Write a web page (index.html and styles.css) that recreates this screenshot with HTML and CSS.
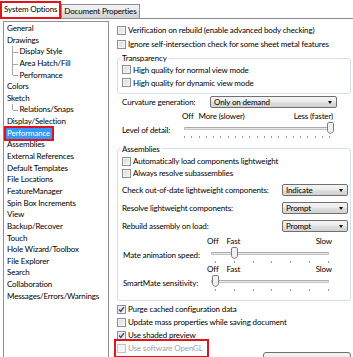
FILE: index.html
```html
<!DOCTYPE html>
<html lang="en">
<head>
<meta charset="utf-8">
<title>System Options - Performance</title>
<link rel="stylesheet" href="styles.css">
</head>
<body>
<div class="dialog">
  <div class="tabs">
    <div class="tab tab-active">System Options</div>
    <div class="tab">Document Properties</div>
    <div class="tab-rest"></div>
  </div>
  <div class="main">
    <ul class="tree">
      <li class="item">General</li>
      <li class="item">Drawings</li>
      <li class="item sub">Display Style</li>
      <li class="item sub">Area Hatch/Fill</li>
      <li class="item sub last">Performance</li>
      <li class="item">Colors</li>
      <li class="item">Sketch</li>
      <li class="item sub last">Relations/Snaps</li>
      <li class="item">Display/Selection</li>
      <li class="item"><span class="selected">Performance</span></li>
      <li class="item">Assemblies</li>
      <li class="item">External References</li>
      <li class="item">Default Templates</li>
      <li class="item">File Locations</li>
      <li class="item">FeatureManager</li>
      <li class="item">Spin Box Increments</li>
      <li class="item">View</li>
      <li class="item">Backup/Recover</li>
      <li class="item">Touch</li>
      <li class="item">Hole Wizard/Toolbox</li>
      <li class="item">File Explorer</li>
      <li class="item">Search</li>
      <li class="item">Collaboration</li>
      <li class="item">Messages/Errors/Warnings</li>
    </ul>

    <div class="pane">
      <div class="check row14"><span class="box"></span>Verification on rebuild (enable advanced body checking)</div>
      <div class="check row14"><span class="box"></span>Ignore self-intersection check for some sheet metal features</div>

      <fieldset class="group group-trans">
        <legend>Transparency</legend>
        <div class="check row13"><span class="box"></span>High quality for normal view mode</div>
        <div class="check row13"><span class="box"></span>High quality for dynamic view mode</div>
      </fieldset>

      <div class="field field-curv">
        <span class="field-label label-curv">Curvature generation:</span>
        <div class="combo combo-curv">Only on demand</div>
      </div>

      <div class="slider-block block-lod">
        <span class="slider-label label-lod">Level of detail:</span>
        <div class="slider slider-lod">
          <div class="scale"><span>Off</span><span class="scale-mid-lod">More (slower)</span><span class="scale-end">Less (faster)</span></div>
          <div class="track">
            <div class="groove groove-lod"></div>
            <svg class="thumb" style="left:145px" width="7" height="12" viewBox="0 0 7 12"><path d="M0.5 1.8 Q0.5 0.5 1.8 0.5 H5.2 Q6.5 0.5 6.5 1.8 V8.8 Q6.5 9.6 5.8 10.2 L3.5 11.5 L1.2 10.2 Q0.5 9.6 0.5 8.8 Z" fill="#f1f1f1" stroke="#7b7b7b"/></svg>
          </div>
          <div class="ticks ticks-lod"><i></i><i></i><i></i><i></i><i></i><i></i><i></i><i></i><i></i><i></i><i></i><i></i><i></i><i></i><i></i><i></i><i></i><i></i><i></i><i></i><i></i></div>
        </div>
      </div>

      <fieldset class="group group-asm">
        <legend>Assemblies</legend>
        <div class="check row12 first-asm"><span class="box"></span>Automatically load components lightweight</div>
        <div class="check row12"><span class="box"></span>Always resolve subassemblies</div>

        <div class="field field-asm">
          <span class="field-label label-asm">Check out-of-date lightweight components:</span>
          <div class="combo combo-asm">Indicate</div>
        </div>
        <div class="field field-asm">
          <span class="field-label label-asm">Resolve lightweight components:</span>
          <div class="combo combo-asm">Prompt</div>
        </div>
        <div class="field field-asm">
          <span class="field-label label-asm">Rebuild assembly on load:</span>
          <div class="combo combo-asm">Prompt</div>
        </div>

        <div class="slider-block block-mate">
          <span class="slider-label label-mate">Mate animation speed:</span>
          <div class="slider slider-mate">
            <div class="scale"><span>Off</span><span class="scale-mid-mate">Fast</span><span class="scale-end">Slow</span></div>
            <div class="track">
              <div class="groove groove-mate"></div>
              <svg class="thumb" style="left:23.5px" width="7" height="12" viewBox="0 0 7 12"><path d="M0.5 1.8 Q0.5 0.5 1.8 0.5 H5.2 Q6.5 0.5 6.5 1.8 V8.8 Q6.5 9.6 5.8 10.2 L3.5 11.5 L1.2 10.2 Q0.5 9.6 0.5 8.8 Z" fill="#f1f1f1" stroke="#7b7b7b"/></svg>
            </div>
            <div class="ticks ticks-mate"><i></i><i></i><i></i><i></i><i></i><i></i><i></i></div>
          </div>
        </div>

        <div class="slider-block block-mate">
          <span class="slider-label label-mate">SmartMate sensitivity:</span>
          <div class="slider slider-mate">
            <div class="scale"><span>Off</span><span class="scale-mid-mate">Fast</span><span class="scale-end">Slow</span></div>
            <div class="track">
              <div class="groove groove-mate"></div>
              <svg class="thumb" style="left:4.5px" width="7" height="12" viewBox="0 0 7 12"><path d="M0.5 1.8 Q0.5 0.5 1.8 0.5 H5.2 Q6.5 0.5 6.5 1.8 V8.8 Q6.5 9.6 5.8 10.2 L3.5 11.5 L1.2 10.2 Q0.5 9.6 0.5 8.8 Z" fill="#f1f1f1" stroke="#7b7b7b"/></svg>
            </div>
            <div class="ticks ticks-mate"><i></i><i></i><i></i><i></i><i></i><i></i><i></i></div>
          </div>
        </div>
      </fieldset>

      <div class="bottom-checks">
        <div class="check row13"><span class="box"><svg width="7" height="7" viewBox="0 0 7 7"><path d="M1 3.6 L2.8 5.5 L6 1.2" fill="none" stroke="#2b4a86" stroke-width="1.4"/></svg></span>Purge cached configuration data</div>
        <div class="check row13"><span class="box"></span>Update mass properties while saving document</div>
        <div class="check row13"><span class="box"><svg width="7" height="7" viewBox="0 0 7 7"><path d="M1 3.6 L2.8 5.5 L6 1.2" fill="none" stroke="#2b4a86" stroke-width="1.4"/></svg></span>Use shaded preview</div>
        <div class="check row13 disabled hl"><span class="box box-dis"></span>Use software OpenGL</div>
      </div>
      <div class="btn">Go To Image Quality</div>
    </div>
  </div>
</div>
</body>
</html>
```

FILE: styles.css
```css
* { box-sizing: border-box; }
html, body { margin: 0; padding: 0; }
body {
  width: 353px;
  height: 357px;
  overflow: hidden;
  background: #fff;
  font-family: Lato, "Liberation Sans", sans-serif;
  font-size: 8px;
  letter-spacing: -0.15px;
  color: #000;
}
.dialog { width: 353px; height: 357px; overflow: hidden; }

/* tabs */
.tabs { display: flex; align-items: flex-end; height: 19px; }
.tab {
  height: 15px;
  padding: 0 2px;
  border: 1px solid #898c95;
  border-bottom: 1px solid #898c95;
  background: linear-gradient(#f3f3f3, #ebebeb 50%, #dedede 50%, #d3d3d3);
  line-height: 13px;
  white-space: nowrap;
}
.tab-active {
  height: 18px;
  padding: 0 3px;
  background: #fff;
  border-bottom: none;
  line-height: 15px;
  outline: 2px solid #e3131b;
  outline-offset: -2px;
}
.tab-rest { flex: 1; border-bottom: 1px solid #898c95; }

/* layout */
.main { display: flex; }

.tree {
  list-style: none;
  margin: 2px 0 0 3px;
  padding: 1px 0 0 0;
  width: 106px;
  height: 400px;
  border: 1px solid #8e9097;
  flex: none;
}
.item {
  line-height: 11.65px;
  height: 11.65px;
  padding-left: 3px;
  white-space: nowrap;
}
.sub { position: relative; padding-left: 15.5px; }
.sub::before {
  content: "";
  position: absolute;
  left: 8px; top: 0; bottom: 0;
  border-left: 1px solid #a6a6a6;
}
.sub.last::before { bottom: 50%; }
.sub::after {
  content: "";
  position: absolute;
  left: 9px; top: 50%; width: 5px;
  border-top: 1px solid #a6a6a6;
}
.selected {
  display: inline-block;
  background: #3399ff;
  color: #fff;
  padding: 0 2px 0 1px;
  margin-left: -1px;
  line-height: 11.65px;
  outline: 2px solid #e3131b;
  outline-offset: 0;
}

.pane {
  flex: 1;
  padding: 4px 2px 0 8px;
  min-width: 0;
}

/* checkboxes */
.check { display: flex; align-items: center; white-space: nowrap; }
.row14 { height: 14px; }
.row13 { height: 13px; }
.row12 { height: 12px; }
.box {
  flex: none;
  width: 9px;
  height: 9px;
  margin-right: 2px;
  border: 1px solid #8f8f8f;
  background: linear-gradient(135deg, #d6d9de, #f6f6f6);
  box-shadow: inset 0 0 0 1px #f3f3f3;
  display: flex;
  align-items: center;
  justify-content: center;
}
.box svg { display: block; }
.disabled { color: #a3a3a3; }
.box-dis { border-color: #c3c3c3; background: #f6f6f6; box-shadow: none; }
.hl {
  width: 89px;
  outline: 2px solid #e3131b;
  outline-offset: 1px;
}

/* group boxes */
.group {
  margin: 0;
  padding: 0 4px;
  border: 1px solid #d5dfe5;
  border-radius: 3px;
  min-width: 0;
}
.group legend {
  padding: 0 2px;
  margin-left: -2px;
  line-height: 10px;
}
.group-trans { margin-top: 2px; padding-bottom: 4px; }
.group-asm { margin-top: 3.5px; padding-bottom: 7px; }
.first-asm { margin-top: 1.5px; }

/* fields */
.field { display: flex; align-items: center; height: 12px; }
.field-curv { margin: 2px 0 0 5px; }
.label-curv { width: 88px; }
.field-asm { margin-top: 5px; }
.field-asm + .field-asm { margin-top: 6px; }
.label-asm { width: 160px; }
.field-label { white-space: nowrap; flex: none; }

.combo {
  position: relative;
  height: 12px;
  border: 1px solid #707070;
  border-radius: 2px;
  background: linear-gradient(#f4f4f4, #ececec 45%, #dedede 55%, #d2d2d2);
  padding-left: 3px;
  line-height: 10px;
  white-space: nowrap;
  flex: none;
}
.combo::after {
  content: "";
  position: absolute;
  right: 4px;
  top: 4px;
  border-left: 2.5px solid transparent;
  border-right: 2.5px solid transparent;
  border-top: 3px solid #111;
}
.combo-curv { width: 127px; }
.combo-asm { width: 66px; }

/* sliders */
.slider-block { display: flex; height: 28px; }
.block-lod { margin: 4px 0 0 5px; }
.block-mate { margin-left: 1px; }
.field-asm + .block-mate { margin-top: 5px; }
.slider-label { padding-top: 13px; line-height: 10px; white-space: nowrap; flex: none; }
.label-lod { width: 60px; }
.label-mate { width: 84px; }
.slider { position: relative; flex: none; }
.slider-lod { width: 152px; }
.slider-mate { width: 127px; }
.scale { display: flex; height: 8px; line-height: 8px; white-space: nowrap; padding-right: 1px; }
.scale-mid-lod { margin-left: 5px; }
.scale-mid-mate { margin-left: 8px; }
.scale-end { margin-left: auto; }
.slider-mate .scale { padding-right: 2px; }
.track { position: relative; height: 12px; margin-top: 2px; padding-top: 5px; }
.groove {
  height: 3px;
  border: 1px solid #c2c4c6;
  border-top-color: #a9abad;
  background: #e7e8ea;
  border-radius: 1px;
}
.groove-lod { margin: 0 4px 0 2px; }
.groove-mate { margin: 0 5px 0 4px; }
.thumb { position: absolute; top: 0; display: block; }
.ticks { display: flex; justify-content: space-between; height: 3px; margin-top: 2px; }
.ticks i { display: block; width: 1px; height: 2px; background: #9c9c9c; }
.ticks-lod { margin-left: 2px; margin-right: 4px; }
.ticks-mate { margin-left: 8px; margin-right: 5px; }

/* bottom */
.bottom-checks { margin-top: 1.5px; }
.btn {
  margin: -2.5px 0 0 auto;
  width: 88px;
  height: 16px;
  border: 1px solid #707070;
  border-radius: 3px;
  background: linear-gradient(#f4f4f4, #ececec 45%, #dedede 55%, #d2d2d2);
  text-align: center;
  line-height: 14px;
  padding-top: 1px;
  white-space: nowrap;
}
```
